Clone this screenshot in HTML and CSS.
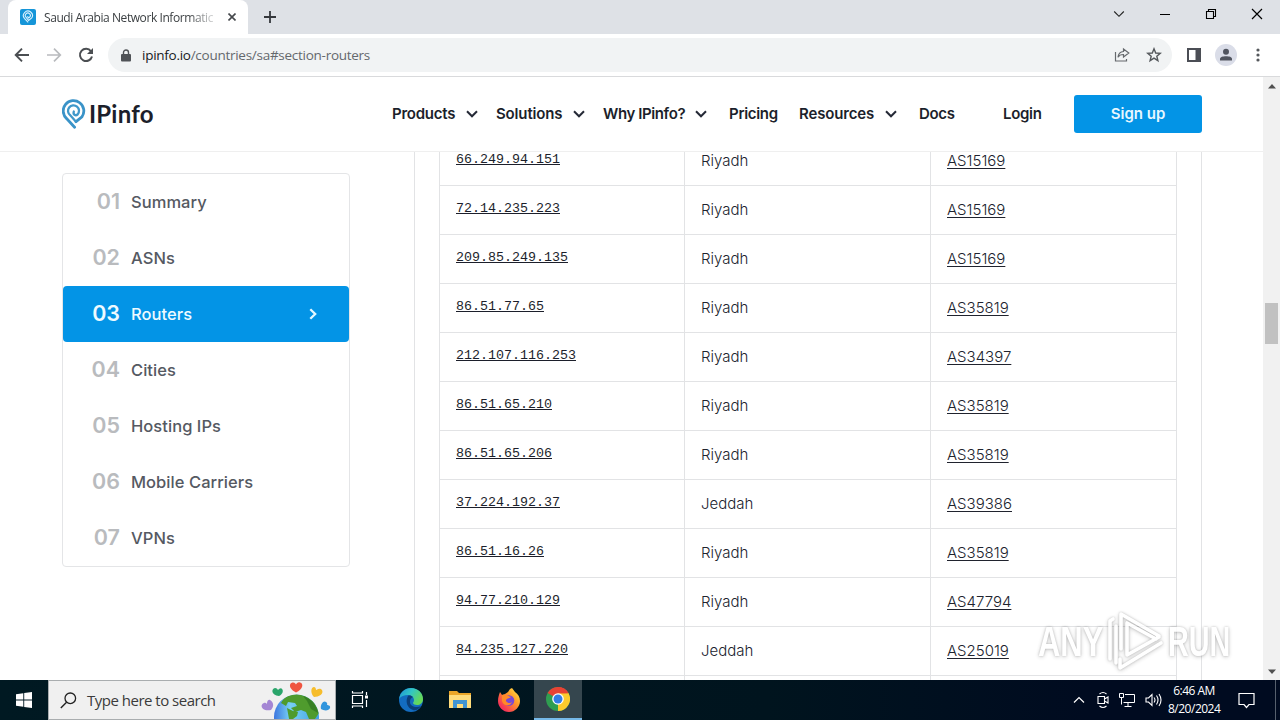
FILE: index.html
```html
<!DOCTYPE html>
<html lang="en">
<head>
<meta charset="utf-8">
<title>Saudi Arabia Network Information</title>
<link rel="stylesheet" href="styles.css">
</head>
<body>
<div class="screen">
  <div class="tabstrip">
    <div class="tab">
      <svg class="favicon" width="16" height="16" viewBox="0 0 16 16"><rect width="16" height="16" rx="2" fill="#1595d8"/><path d="M8.200 13.300 4.600 9.600A4.500 4.500 0 1 1 11.700 9L8.600 11.500 6 8.200A2.500 2.500 0 1 1 9.800 8L8.400 9 7.500 7.200" fill="none" stroke="#d8f1ff" stroke-width="1.100"/></svg>
      <span class="tab-title">Saudi Arabia Network Informatic</span>
      <svg class="tab-close" width="8" height="8" viewBox="0 0 8 8"><path d="M.5.5l7 7M7.500.5l-7 7" stroke="#45484c" stroke-width="1.600"/></svg>
    </div>
    <svg class="new-tab" width="12" height="12" viewBox="0 0 12 12"><path d="M6 0v12M0 6h12" stroke="#35383c" stroke-width="1.800"/></svg>
    <div class="window-buttons">
      <svg width="12" height="12" viewBox="0 0 12 12"><path d="M1.200 3.500 6 8.300l4.800-4.800" fill="none" stroke="#222" stroke-width="1.100"/></svg>
      <svg width="12" height="12" viewBox="0 0 12 12"><path d="M1 6.500h10" stroke="#000"/></svg>
      <svg width="12" height="12" viewBox="0 0 12 12"><path d="M1.500 3.500h7v7h-7zM3.500 3.500v-2h7v7h-2" fill="none" stroke="#000" stroke-width="1.100"/></svg>
      <svg width="12" height="12" viewBox="0 0 12 12"><path d="M1 1l10 10M11 1 1 11" stroke="#000" stroke-width="1.200"/></svg>
    </div>
  </div>
  <div class="toolbar">
    <svg class="tool-back" width="16" height="16" viewBox="0 0 16 16"><path d="M15 8H2M8 1.700 1.700 8 8 14.300" fill="none" stroke="#4b4e52" stroke-width="1.900"/></svg>
    <svg class="tool-forward" width="16" height="16" viewBox="0 0 16 16"><path d="M1 8h13M8 1.700 14.300 8 8 14.300" fill="none" stroke="#b9bbbe" stroke-width="1.700"/></svg>
    <svg class="tool-reload" width="16" height="16" viewBox="0 0 16 16"><path d="M13 4.300A6.100 6.100 0 1 0 14 9.500" fill="none" stroke="#4b4e52" stroke-width="2"/><path d="M15 1v6H9z" fill="#4b4e52"/></svg>
    <div class="omnibox">
      <svg class="lock" width="10" height="13" viewBox="0 0 10 13"><rect x="0" y="5" width="10" height="7.500" rx="1" fill="#505357"/><path d="M2.500 6V3.500a2.500 2.500 0 0 1 5 0V6" fill="none" stroke="#505357" stroke-width="1.400"/></svg>
      <span class="url"><b>ipinfo.io</b>/countries/sa#section-routers</span>
      <svg class="share" width="16" height="16" viewBox="0 0 16 16"><path d="M1.500 5v9h11v-2M9.500 2l5.300 4-5.300 4V7.500c-3 0-4.500.8-5.500 2.800.3-3.300 2.500-5.600 5.500-5.800z" fill="none" stroke="#66696d" stroke-width="1.200"/></svg>
      <svg class="star" width="16" height="16" viewBox="0 0 16 16"><path d="M8 1.800 9.700 6l4.600.3-3.500 2.900 1.100 4.500L8 11.200l-3.900 2.500 1.100-4.500-3.500-2.900L6.300 6z" fill="none" stroke="#55585c" stroke-width="1.400"/></svg>
    </div>
    <svg class="side-panel" width="14" height="14" viewBox="0 0 14 14"><path d="M1 1h12v12H1z" fill="none" stroke="#4b4e55" stroke-width="2"/><path d="M8.500 0H14v14H8.500z" fill="#4b4e55"/></svg>
    <svg class="profile" width="22" height="22" viewBox="0 0 22 22"><circle cx="11" cy="11" r="11" fill="#dadde8"/><circle cx="11" cy="7.700" r="3" fill="#50545f"/><path d="M5 16.500v-1.700c0-3.300 12-3.300 12 0v1.700z" fill="#50545f"/></svg>
    <svg class="kebab" width="4" height="14" viewBox="0 0 4 14"><g fill="#55585c"><circle cx="2" cy="2" r="1.600"/><circle cx="2" cy="7" r="1.600"/><circle cx="2" cy="12" r="1.600"/></g></svg>
  </div>

  <div class="viewport">
    <div class="page">
      <header class="header">
        <svg class="pin" width="24" height="30" viewBox="0 0 24 30"><path d="M12.600 28.200 4.600 19.600A10.300 10.300 0 1 1 20 17.800L14 22.700" fill="none" stroke="#3a93c8" stroke-width="2.800" stroke-linecap="round"/><path d="M14 22.700 8.300 16.300A5.500 5.500 0 1 1 15.600 15.500C13.500 17.200 10.800 15.500 11.800 12.500" fill="none" stroke="#3f98ca" stroke-width="2.300" stroke-linecap="round"/></svg>
        <span class="brand">IPinfo</span>
        <nav class="nav">
          <a class="n-products">Products</a><svg class="caret" width="12" height="8" viewBox="0 0 12 8"><path d="M1 1.300 6 6.300l5-5"/></svg>
          <a class="n-solutions">Solutions</a><svg class="caret" width="12" height="8" viewBox="0 0 12 8"><path d="M1 1.300 6 6.300l5-5"/></svg>
          <a class="n-why">Why IPinfo?</a><svg class="caret" width="12" height="8" viewBox="0 0 12 8"><path d="M1 1.300 6 6.300l5-5"/></svg>
          <a class="n-pricing">Pricing</a>
          <a class="n-resources">Resources</a><svg class="caret" width="12" height="8" viewBox="0 0 12 8"><path d="M1 1.300 6 6.300l5-5"/></svg>
          <a class="n-docs">Docs</a>
          <a class="n-login">Login</a>
        </nav>
        <a class="signup">Sign up</a>
      </header>
      <div class="body">
        <aside class="menu">
          <div class="menu-item"><span class="num">01</span><span class="lab">Summary</span></div>
          <div class="menu-item"><span class="num">02</span><span class="lab">ASNs</span></div>
          <div class="menu-item active"><span class="num">03</span><span class="lab">Routers</span><svg class="go" width="8" height="12" viewBox="0 0 8 12"><path d="M1.300 1.200 6.200 6l-4.900 4.800" fill="none" stroke="#e4f7ff" stroke-width="2.300"/></svg></div>
          <div class="menu-item"><span class="num">04</span><span class="lab">Cities</span></div>
          <div class="menu-item"><span class="num">05</span><span class="lab">Hosting IPs</span></div>
          <div class="menu-item"><span class="num">06</span><span class="lab">Mobile Carriers</span></div>
          <div class="menu-item"><span class="num">07</span><span class="lab">VPNs</span></div>
        </aside>
        <main class="card">
          <div class="table">
            <div class="row"><a class="ip">66.249.94.151</a><span class="city">Riyadh</span><a class="asn">AS15169</a></div>
            <div class="row"><a class="ip">72.14.235.223</a><span class="city">Riyadh</span><a class="asn">AS15169</a></div>
            <div class="row"><a class="ip">209.85.249.135</a><span class="city">Riyadh</span><a class="asn">AS15169</a></div>
            <div class="row"><a class="ip">86.51.77.65</a><span class="city">Riyadh</span><a class="asn">AS35819</a></div>
            <div class="row"><a class="ip">212.107.116.253</a><span class="city">Riyadh</span><a class="asn">AS34397</a></div>
            <div class="row"><a class="ip">86.51.65.210</a><span class="city">Riyadh</span><a class="asn">AS35819</a></div>
            <div class="row"><a class="ip">86.51.65.206</a><span class="city">Riyadh</span><a class="asn">AS35819</a></div>
            <div class="row"><a class="ip">37.224.192.37</a><span class="city">Jeddah</span><a class="asn">AS39386</a></div>
            <div class="row"><a class="ip">86.51.16.26</a><span class="city">Riyadh</span><a class="asn">AS35819</a></div>
            <div class="row"><a class="ip">94.77.210.129</a><span class="city">Riyadh</span><a class="asn">AS47794</a></div>
            <div class="row"><a class="ip">84.235.127.220</a><span class="city">Jeddah</span><a class="asn">AS25019</a></div>
            <div class="row"><span class="ip"></span><span class="city"></span><span class="asn"></span></div>
          </div>
        </main>
      </div>
    </div>
    <div class="scrollbar">
      <svg width="8" height="5" viewBox="0 0 8 5"><path d="M4 0l4 4.500H0z" fill="#505050"/></svg>
      <div class="thumb"></div>
      <svg width="8" height="5" viewBox="0 0 8 5"><path d="M0 .5h8L4 5z" fill="#505050"/></svg>
    </div>
    <div class="watermark">
      <span class="wm-any">ANY</span>
      <svg class="wm-mark" width="58" height="64" viewBox="0 0 58 64"><g fill="none" stroke="#fff" stroke-width="3.600" stroke-linejoin="round" stroke-linecap="round"><path d="M4 50V12l3-2"/><path d="M15 40V5l38 22-3 3-29-16v32l32-18"/><path d="M10 54V17M14 50v9l41-25"/></g></svg>
      <span class="wm-run">RUN</span>
    </div>
  </div>

  <div class="taskbar">
    <div class="start"><svg width="16" height="16" viewBox="0 0 16 16"><path d="M0 2.300 7.300 1.200v6.300H0zM8.200 1 16 0v7.500H8.200zM0 8.400h7.300v6.400L0 13.700zM8.200 8.400H16V16l-7.800-1.100z" fill="#fff"/></svg></div>
    <div class="search">
      <svg width="17" height="17" viewBox="0 0 17 17"><circle cx="10.300" cy="6.300" r="5.300" fill="none" stroke="#222" stroke-width="1.300"/><path d="M6.600 10.200.8 16" stroke="#222" stroke-width="1.400"/></svg>
      <span class="search-text">Type here to search</span>
      <svg class="globe" width="70" height="38" viewBox="261 682 70 38"><defs><clipPath id="earth"><circle cx="296.500" cy="718" r="22.500"/></clipPath><linearGradient id="sea"><stop stop-color="#3c76df"/><stop offset=".35" stop-color="#78d0f4"/><stop offset="1" stop-color="#3f9ee4"/></linearGradient></defs>
        <g clip-path="url(#earth)"><path d="M274 695h46v25h-46z" fill="url(#sea)"/><path d="M281 704c3-6 9-9 16-9 12 1 20 9 22 19l-4 6h-6l-3-7-5-2-6 2-4-4 6-2-2-3-7-1-2 4zM287 709l6 3 5 1-1 4-4 3h-4z" fill="#4f9b2d"/><path d="M303 697c8 3 14 9 15 17l-7-4-4-8z" fill="#377f23"/></g>
        <path d="M296 693.500c-9-5-6-10-3-10 2 0 3 2 3 2s2-3 4-2c4 1 3 7-4 10z" fill="#ef5541"/>
        <path d="M279 697c-8-1-8-7-4-8 2 0 3 2 3 2s3-3 4-1c2 2 0 6-3 7z" fill="#2ba56b"/>
        <path d="M314 698c-4-4-3-10 0-10 2 0 2 3 2 3s4-3 6 0c2 4-3 7-8 7z" fill="#f6bd2c"/>
        <path d="M271 711c-9 2-12-5-7-7 2-1 3 1 3 1s0-5 3-4c4 2 4 7 1 10z" fill="#a486d4"/>
        <path d="M321 710c-1-5 3-9 5-7 2 1 1 3 1 3s4 0 3 3c-1 3-6 3-9 1z" fill="#3095dd"/></svg>
    </div>
    <div class="app"><svg width="18" height="18" viewBox="0 0 18 18"><path d="M1.500 4.500h10v8h-10zM1.500 0v2h10V0M1.500 17v-2h10v2M15.500 1v3M15.500 9v7" fill="none" stroke="#fff" stroke-width="1.200"/><path d="M14 4.500h3v3h-3z" fill="#fff"/></svg></div>
    <div class="app edge"><svg width="26" height="26" viewBox="0 0 26 26"><defs><linearGradient id="eg" x1="0" y1="0" x2="1" y2=".5"><stop stop-color="#1c8fd9"/><stop offset=".5" stop-color="#32c6c4"/><stop offset="1" stop-color="#66d957"/></linearGradient></defs><circle cx="13" cy="13" r="12" fill="#136cc0"/><path d="M1.200 12C2 5 7 1 13 1c7 0 12 5 12 11 0 4-3 6-6 6-2 0-4-1-4-2 0-1 1-1 1-3 0-3-3-5-6-5-4 0-7 1-8.800 4z" fill="url(#eg)"/><path d="M10 9c-3 5-1 12 5 14 3 1 6-1 8-4-4 2-11 1-11-4 0-3 1-4 3-5-1-1-4-2-5-1z" fill="#0b3f79"/></svg></div>
    <div class="app files"><svg width="22" height="20" viewBox="0 0 22 20"><path d="M0 1h8l2 2h12v15H0z" fill="#eba628"/><path d="M0 5h22v13H0z" fill="#ffdc7b"/><path d="M4 10h14v8h-4v-4H8v4H4z" fill="#4194d1"/></svg></div>
    <div class="app fox"><svg width="24" height="24" viewBox="0 0 24 24"><defs><linearGradient id="fg" x1="1" y1="0" x2="0" y2="1"><stop stop-color="#fff04c"/><stop offset=".4" stop-color="#ff9828"/><stop offset=".8" stop-color="#f53558"/></linearGradient></defs><path d="M3 4l2 3 3-1 3-2 2-3 2-1 3 4c3 2 5 5 5 9 0 6-5 11-11 11S1 19 1 13c0-4 1-6 2-9z" fill="url(#fg)"/><circle cx="12" cy="12.500" r="5.300" fill="#7849d5"/><path d="M5 7c4-1 6 1 9 2-2 2-5 1-5 4 2 3 5 2 6 1-2 5-9 4-10-1z" fill="#ff8a28"/></svg></div>
    <div class="app active-app"><svg width="24" height="24" viewBox="0 0 24 24"><circle cx="12" cy="12" r="12" fill="#2f9e50"/><path d="M12 12 1.600 6A12 12 0 0 1 22.400 6z" fill="#e84234"/><path d="M12 12 22.400 6A12 12 0 0 1 12 24z" fill="#fccb2d"/><path d="M12 6.200H22.500L17 15z" fill="#fccb2d"/><path d="M12 6.200H22.500A12 12 0 0 0 12 0z" fill="#e84234"/><circle cx="12" cy="12" r="5.800" fill="#fff"/><circle cx="12" cy="12" r="4.500" fill="#337de5"/></svg></div>
    <div class="tray">
      <svg width="12" height="16" viewBox="0 0 12 16"><path d="M1 10.500 6 5.500l5 5" fill="none" stroke="#fff" stroke-width="1.200"/></svg>
      <svg class="cam" width="12" height="18" viewBox="0 0 12 18"><path d="M1 5.500h6.500v7H1zM7.500 8 11 6v6l-3.500-2M2.500 3q3.500-3 7 0M2.500 15q3.500 3 7 0" fill="none" stroke="#fff" stroke-width="1.100"/></svg>
      <svg width="16" height="16" viewBox="0 0 16 16"><path d="M6 2.500h9.500v8H4.500M9 10.500V14M5.500 14.500h7M.5 1.500h4v4h-4zM2.500 5.500v7" fill="none" stroke="#fff"/></svg>
      <svg width="17" height="16" viewBox="0 0 17 16"><path d="M1 6h2.500L7 2.500v11L3.500 10H1zM9 5.500q2 2.500 0 5M11.500 3.500q3 4.500 0 9M14 2q4 6 0 12" fill="none" stroke="#fff" stroke-width="1.100"/></svg>
    </div>
    <div class="clock"><span>6:46 AM</span><span class="date">8/20/2024</span></div>
    <svg class="notice" width="17" height="17" viewBox="0 0 17 17"><path d="M1 1.500h15v11h-5l-2.500 3-2.500-3H1z" fill="none" stroke="#fff" stroke-width="1.200"/></svg>
    <div class="peek"></div>
  </div>
</div>
</body>
</html>
```
FILE: styles.css
```css
* { box-sizing: border-box; }
body { margin: 0; font-family: "Open Sans", "Noto Sans", sans-serif; }
svg { display: block; flex: none; }
.screen { width: 1280px; height: 720px; display: flex; flex-direction: column; overflow: hidden; background: #fff; }

.tabstrip { height: 34px; flex: none; display: flex; background: #dee1e6; align-items: center; padding-left: 8px; }
.tab { width: 240px; height: 34px; display: flex; align-items: center; background: #fff; border-radius: 8px 8px 0 0; padding-left: 12px; flex: none; }
.tab-title { margin-left: 8px; width: 171px; white-space: nowrap; font-size: 12px; letter-spacing: -0.42px; color: #3c4043; -webkit-mask-image: linear-gradient(90deg, #000 84%, rgba(0, 0, 0, .15)); mask-image: linear-gradient(90deg, #000 84%, rgba(0, 0, 0, .15)); }
.tab-close { margin-left: 13px; }
.new-tab { margin-left: 16px; }
.window-buttons { display: flex; gap: 34px; margin-left: auto; padding-right: 17px; margin-bottom: 6px; }

.toolbar { height: 43px; flex: none; display: flex; align-items: center; background: #fff; border-bottom: 1px solid #d9dadc; padding-left: 14px; }
.tool-forward, .tool-reload { margin-left: 16px; }
.omnibox { width: 1064px; height: 34px; margin-left: 14px; border-radius: 17px; background: #f1f3f4; display: flex; align-items: center; padding-left: 13px; }
.url { margin-left: 11px; font-size: 13.5px; letter-spacing: -0.27px; color: #64686d; white-space: nowrap; }
.url b { font-weight: 400; color: #17191c; }
.share { margin-left: auto; }
.star { margin: 0 10px 0 16px; }
.side-panel { margin-left: 15px; }
.profile { margin-left: 14px; }
.kebab { margin-left: 19px; }

.viewport { height: 603px; flex: none; display: flex; position: relative; overflow: hidden; }
.page { width: 1263px; display: flex; flex-direction: column; font-family: Inter, "Open Sans", sans-serif; color: #1c1f2b; }
.header { height: 75px; flex: none; border-bottom: 1px solid #efefef; display: flex; align-items: center; padding-left: 62px; }
.brand { width: 68px; margin-left: 3px; font: 700 24px/30px Lato, sans-serif; letter-spacing: 0.2px; white-space: nowrap; }
.nav { display: flex; align-items: center; margin-left: 235px; margin-top: -1px; font-size: 15px; font-weight: 600; white-space: nowrap; letter-spacing: -0.3px; }
.caret { fill: none; stroke: #252936; stroke-width: 2; }
.n-products { width: 74px; letter-spacing: -0.23px; }
.n-solutions { width: 77px; margin-left: 18px; letter-spacing: -0.15px; }
.n-why { width: 92px; margin-left: 18px; letter-spacing: -0.4px; }
.n-pricing { width: 70px; margin-left: 22px; letter-spacing: -0.3px; }
.n-resources { width: 86px; letter-spacing: -0.15px; }
.n-docs { width: 84px; margin-left: 22px; }
.n-login { width: 71px; }
.signup { width: 128px; height: 38px; border-radius: 3px; background: #0394e6; color: #e7f7ff; font-size: 15px; font-weight: 600; line-height: 38px; text-align: center; }

.body { height: 528px; display: flex; align-items: flex-start; padding-left: 62px; overflow: hidden; }
.menu { width: 288px; margin-top: 21px; border: 1px solid #e4e5e7; border-radius: 4px; flex: none; }
.menu-item { height: 56px; display: flex; align-items: center; }
.num { width: 57px; margin-top: -2px; text-align: right; font: 600 21.5px/28px Inter, sans-serif; color: #b9bbbe; }
.lab { margin-left: 11px; font-size: 16.5px; font-weight: 500; letter-spacing: 0.05px; color: #555962; }
.active { background: #0394e6; border-radius: 4px; }
.active .num, .active .lab { color: #eefaff; }
.go { margin: 0 32px 0 auto; }
.card { width: 788px; height: 528px; margin-left: 64px; padding-left: 24px; border: solid #e2e3e5; border-width: 0 1px; flex: none; overflow: hidden; }
.table { width: 738px; margin-top: -15px; border-left: 1px solid #e2e3e5; }
.row { height: 49px; display: grid; grid-template-columns: 245px 246px 246px; border-bottom: 1px solid #e2e3e5; }
.row > * { border-right: 1px solid #e2e3e5; padding-left: 16px; line-height: 48px; }
.row .ip { font-family: "Liberation Mono", monospace; font-size: 13.33px; line-height: 46px; }
.ip, .asn { text-decoration: underline; text-underline-offset: 2px; text-decoration-thickness: 1px; }
.row .ip { text-underline-offset: 1px; }
.city, .asn { font-size: 15px; font-weight: 300; color: #20232e; }

.scrollbar { width: 17px; background: #f1f1f1; display: flex; flex-direction: column; align-items: center; padding: 7px 0 6px; }
.thumb { width: 13px; height: 41px; background: #c1c1c1; margin: 214px 0 auto; }
.watermark { position: absolute; left: 1038px; top: 532px; display: flex; align-items: center; font: 700 43px/60px "Liberation Sans", sans-serif; color: #fff; filter: drop-shadow(0 0 1px rgba(0, 0, 0, .22)) drop-shadow(0 1px 2px rgba(0, 0, 0, .22)); opacity: .85; }
.watermark span { display: block; width: 68px; transform-origin: left; transform: scaleX(.72); }
.watermark .wm-run { width: 64px; margin-left: 4px; transform: scaleX(.67); }

.taskbar { height: 40px; flex: none; display: flex; align-items: center; background: linear-gradient(90deg, #001922, #00141e 60%, #000b20 85%); color: #fff; }
.start { width: 48px; display: flex; justify-content: center; }
.search { width: 288px; height: 40px; display: flex; align-items: center; padding-left: 11px; background: #f0f0f0; border: 1px solid #a9adaf; color: #3b3b3b; flex: none; }
.search-text { margin-left: 10px; width: 174px; font-size: 15px; letter-spacing: -0.5px; white-space: nowrap; }
.app { width: 48px; height: 40px; display: flex; align-items: center; justify-content: center; flex: none; }
.edge { width: 54px; }
.files { width: 44px; }
.fox { width: 54px; margin-right: -2px; }
.active-app { background: #35464e; border-bottom: 2px solid #76b9e8; }
.tray { display: flex; align-items: center; gap: 10px; margin-left: 491px; width: 95px; }
.tray .cam { margin: 0 0 0 2px; }
.clock { width: 52px; display: flex; flex-direction: column; text-align: center; font: 12px/18px "Open Sans", sans-serif; letter-spacing: -0.5px; white-space: nowrap; }
.notice { margin-left: 18px; }
.peek { width: 1px; height: 40px; background: #56606d; margin-left: auto; margin-right: 4px; }
```
